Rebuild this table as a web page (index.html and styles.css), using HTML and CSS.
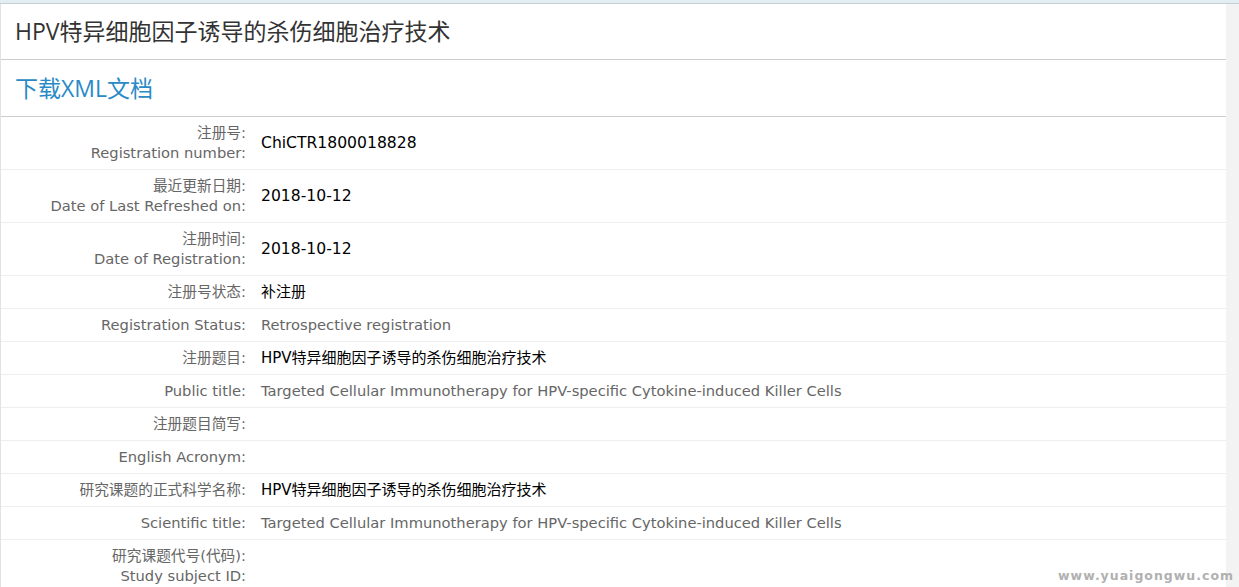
FILE: index.html
```html
<!DOCTYPE html>
<html lang="zh-CN">
<head>
    <meta charset="UTF-8">
    <title>HPV特异细胞因子诱导的杀伤细胞治疗技术</title>
    <link rel="stylesheet" href="styles.css">
</head>
<body>
    <div class="topbar"></div>
    <div class="page">
        <h1 class="title">HPV特异细胞因子诱导的杀伤细胞治疗技术</h1>
        <h2 class="download"><a href="#">下载XML文档</a></h2>
        <table class="info">
            <tr>
                <td class="label">注册号:<br>Registration number:</td>
                <td class="value num">ChiCTR1800018828</td>
            </tr>
            <tr>
                <td class="label">最近更新日期:<br>Date of Last Refreshed on:</td>
                <td class="value num">2018-10-12</td>
            </tr>
            <tr>
                <td class="label">注册时间:<br>Date of Registration:</td>
                <td class="value num">2018-10-12</td>
            </tr>
            <tr>
                <td class="label">注册号状态:</td>
                <td class="value cn">补注册</td>
            </tr>
            <tr>
                <td class="label">Registration Status:</td>
                <td class="value en">Retrospective registration</td>
            </tr>
            <tr>
                <td class="label">注册题目:</td>
                <td class="value cn">HPV特异细胞因子诱导的杀伤细胞治疗技术</td>
            </tr>
            <tr>
                <td class="label">Public title:</td>
                <td class="value en">Targeted Cellular Immunotherapy for HPV-specific Cytokine-induced Killer Cells</td>
            </tr>
            <tr>
                <td class="label">注册题目简写:</td>
                <td class="value en"></td>
            </tr>
            <tr>
                <td class="label">English Acronym:</td>
                <td class="value en"></td>
            </tr>
            <tr>
                <td class="label">研究课题的正式科学名称:</td>
                <td class="value cn">HPV特异细胞因子诱导的杀伤细胞治疗技术</td>
            </tr>
            <tr>
                <td class="label">Scientific title:</td>
                <td class="value en">Targeted Cellular Immunotherapy for HPV-specific Cytokine-induced Killer Cells</td>
            </tr>
            <tr>
                <td class="label">研究课题代号(代码):<br>Study subject ID:</td>
                <td class="value en"></td>
            </tr>
        </table>
    </div>
    <div class="watermark">www.yuaigongwu.com</div>
</body>
</html>
```

FILE: styles.css
```css
body {
    margin: 0;
    padding: 0;
    background-color: #f3f3f3;
    font-family: "DejaVu Sans", Verdana, "Noto Sans CJK SC", sans-serif;
    overflow: hidden;
}

.topbar {
    height: 3px;
    background-color: #e4eef2;
    border-bottom: 1px solid #c5d0d5;
}

.page {
    width: 1225px;
    background-color: white;
    border-left: 1px solid #e2e2e2;
}

.title, .download {
    margin: 0;
    padding: 10px 14px 11px;
    font-family: "Open Sans", "Noto Sans CJK SC", sans-serif;
    font-size: 23px;
    font-weight: normal;
    line-height: 34px;
    border-bottom: 1px solid #ccc;
}

.title {
    color: #333;
}

.download {
    padding-top: 11px;
}

.download a {
    color: #2a8ac6;
    text-decoration: none;
}

.info {
    width: 100%;
    border-collapse: collapse;
}

.info td {
    padding: 6px 5px;
    line-height: 20px;
    border-bottom: 1px solid #eee;
    vertical-align: middle;
}

.label {
    width: 240px;
    text-align: right;
    font-size: 14.7px;
    color: #666;
}

.value {
    padding-left: 10px !important;
}

.value.num {
    font-size: 15.6px;
    color: #000;
}

.value.cn {
    font-size: 15px;
    color: #000;
}

.value.en {
    font-size: 14.7px;
    color: #666;
}

.watermark {
    position: absolute;
    right: 5px;
    bottom: 4px;
    font-family: "DejaVu Sans", sans-serif;
    font-weight: bold;
    font-size: 12.5px;
    letter-spacing: 1px;
    color: #b0b0b0;
}
```
